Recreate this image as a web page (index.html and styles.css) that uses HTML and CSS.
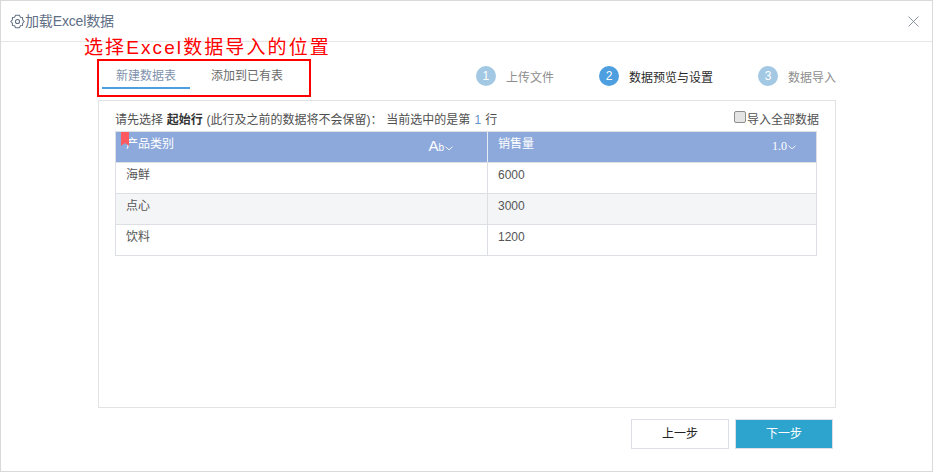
FILE: index.html
```html
<!DOCTYPE html>
<html lang="zh-CN">
<head>
<meta charset="utf-8">
<title>加载Excel数据</title>
<link rel="stylesheet" href="styles.css">
</head>
<body>
<div class="dialog">
  <header class="head">
    <div class="title">
      <svg class="gear" viewBox="0 0 16 16" width="15" height="15" fill="none" stroke="#5f6f85" stroke-width="1.100" stroke-linejoin="round">
        <path d="M.8 8L2.500 6.300 2.600 3.800 4.900 3.400 6 1.400H10L11.100 3.400 13.400 3.800 13.500 6.300 15.200 8 13.500 9.700 13.400 12.200 11.100 12.600 10 14.600H6L4.900 12.600 2.600 12.200 2.500 9.700Z"/>
        <circle cx="8" cy="8" r="2.200"/>
      </svg>
      <span>加载Excel数据</span>
    </div>
    <svg class="close" viewBox="0 0 11 11" width="11" height="11" stroke="#8a94a0" stroke-width="1"><path d="M.5.5l10 10M10.500.5l-10 10"/></svg>
  </header>

  <div class="nav">
    <div class="tabs">
      <div class="tab active">新建数据表</div>
      <div class="tab">添加到已有表</div>
    </div>
    <div class="steps">
      <div class="step s1"><i>1</i><span>上传文件</span></div>
      <div class="step s2 current"><i>2</i><span>数据预览与设置</span></div>
      <div class="step s3"><i>3</i><span>数据导入</span></div>
    </div>
  </div>

  <section class="panel">
    <div class="info">
      <p>请先选择 <b>起始行</b> (此行及之前的数据将不会保留)：&nbsp;当前选中的是第 <em>1</em> 行</p>
      <label class="all"><span class="check"></span>导入全部数据</label>
    </div>
    <div class="grid">
      <div class="row hdr">
        <div class="cell first"><span class="flag"></span>产品类别<span class="type ab">A<small>b</small><svg viewBox="0 0 9 5" width="8" height="5" fill="none" stroke="#fff"><path d="M.5.500l4 3.500 4-3.500"/></svg></span></div>
        <div class="cell second">销售量<span class="type num">1.0<svg viewBox="0 0 9 5" width="8" height="5" fill="none" stroke="#fff"><path d="M.5.500l4 3.500 4-3.500"/></svg></span></div>
      </div>
      <div class="row"><div class="cell first">海鲜</div><div class="cell second">6000</div></div>
      <div class="row alt"><div class="cell first">点心</div><div class="cell second">3000</div></div>
      <div class="row"><div class="cell first">饮料</div><div class="cell second">1200</div></div>
    </div>
  </section>

  <footer class="foot">
    <button class="btn">上一步</button>
    <button class="btn primary">下一步</button>
  </footer>

  <div class="annot-text">选择Excel数据导入的位置</div>
  <div class="annot-box"></div>
</div>
</body>
</html>
```
FILE: styles.css
```css
* { box-sizing: border-box; }
html, body { margin: 0; padding: 0; background: #fff; }
body {
  width: 933px; height: 472px; overflow: hidden;
  font-family: "Liberation Sans", "Noto Sans CJK SC", sans-serif;
  font-size: 12px; color: #4a4a4a;
}
.dialog {
  position: relative; width: 933px; height: 472px;
  border: 1px solid #d9d9d9; background: #fff;
  display: flex; flex-direction: column;
}
.head {
  height: 41px; flex: none; border-bottom: 1px solid #e6e6e6;
  display: flex; align-items: center; justify-content: space-between;
  padding: 0 13px 0 9px;
}
.title { display: flex; align-items: center; font-size: 14px; letter-spacing: -0.15px; color: #5f6f85; line-height: 16px; }
.gear { flex: none; }
.close { flex: none; }

.nav { height: 58px; flex: none; position: relative; display: flex; justify-content: space-between; }
.tabs { display: flex; margin: 18px 0 0 101px; height: 29px; }
.tab { padding: 8px 0 0; height: 29px; line-height: 16px; color: #6b6b6b; text-align: center; }
.tab.active { width: 88px; color: #7f93ad; border-bottom: 2px solid #4d9fdf; }
.tab + .tab { width: 72px; margin-left: 21px; }
.steps { display: flex; margin: 24px 96px 0 0; height: 20px; }
.step { display: flex; align-items: center; color: #8e8e8e; }
.step i {
  width: 20px; height: 20px; border-radius: 50%; background: #a2c8e4; color: #fff;
  font-style: normal; font-size: 12px; line-height: 20px; text-align: center;
  margin-right: 10px;
}
.step.current { color: #2b2b2b; }
.step.current i { background: #4d9fdf; }
.s2 { margin-left: 45px; }
.s3 { margin-left: 45px; }

.panel {
  width: 738px; height: 308px; margin-left: 97px; flex: none;
  border: 1px solid #e3e3e3; padding: 0 18px 0 16px;
}
.info { height: 30px; position: relative; display: flex; justify-content: space-between; }
.info p { margin: 11px 0 0; line-height: 16px; color: #4f4f4f; word-spacing: 0.4px; }
.info b { font-weight: 700; color: #333; }
.info em { font-style: normal; color: #5f93cc; margin: 0 0.5px; }
.all { display: flex; align-items: flex-start; margin: 11px -2px 0 0; line-height: 16px; color: #4f4f4f; }
.check {
  width: 12px; height: 12px; margin: -1px 1px 0 0; border: 1px solid #8f8f8f; border-radius: 2px;
  background: #e4e4e4; display: block;
}
.grid { width: 702px; border: 1px solid #dcdfe3; border-top: 0; }
.row { display: flex; height: 31px; border-bottom: 1px solid #dcdfe3; }
.row:last-child { height: 30px; border-bottom: 0; }
.row.alt { background: #f4f5f7; }
.row.hdr { background: #8da9db; color: #fff; border-top: 1px solid #dcdfe3; border-bottom: 1px solid #dcdfe3; height: 32px; }
.cell { position: relative; padding: 4px 0 0 10px; line-height: 16px; color: #555; }
.hdr .cell { color: #fff; padding-top: 4px; }
.first { width: 372px; border-right: 1px solid #dcdfe3; }
.second { flex: 1; }
.hdr .first { border-right-color: #e6ebf5; }
.flag {
  position: absolute; left: 5px; top: 0; width: 8px; height: 14px; background: #ff5a5f;
  clip-path: polygon(0 0, 100% 0, 100% 100%, 50% 78%, 0 100%);
}
.type { position: absolute; top: 6px; display: flex; align-items: baseline; color: #fff; }
.type svg { margin-left: 1px; }
.ab { right: 34px; font-size: 15px; }
.ab small { font-size: 10px; }
.num { right: 20px; font-size: 12px; font-family: "Liberation Serif", serif; }

.foot { display: flex; justify-content: flex-end; gap: 6px; padding: 11px 99px 0 0; }
.btn {
  width: 98px; height: 30px; border: 1px solid #dcdfe6; background: #fff; color: #222;
  font: 12px/16px "Liberation Sans", "Noto Sans CJK SC", sans-serif; padding: 0;
}
.btn.primary { background: #2ca4cd; color: #fff; }

.annot-text {
  position: absolute; left: 83px; top: 36px; color: #f00;
  font-size: 19px; line-height: 22px; letter-spacing: 2.100px; white-space: nowrap;
}
.annot-box { position: absolute; left: 96px; top: 58px; width: 214px; height: 38px; border: 2px solid #f00; }
```
